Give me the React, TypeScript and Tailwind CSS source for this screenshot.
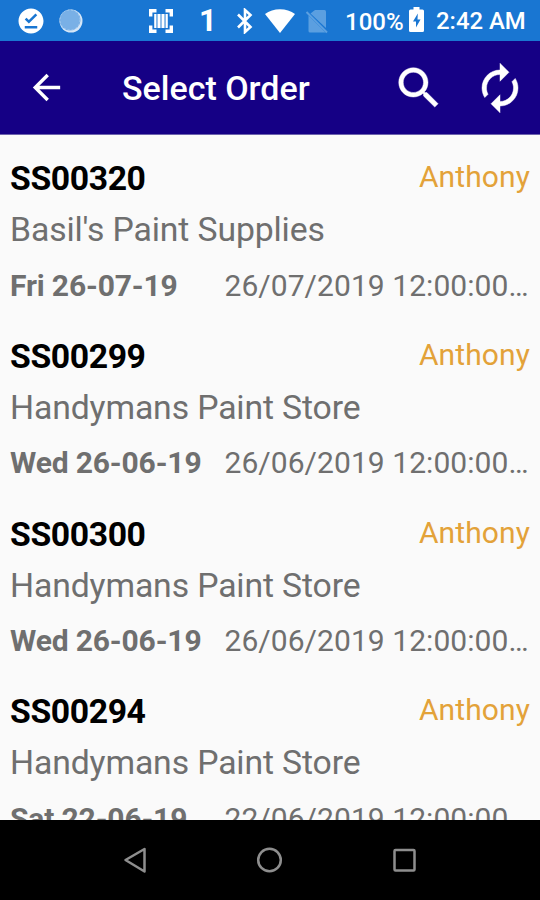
import { MdArrowBack, MdOfflinePin } from "react-icons/md";

type Order = {
  id: string;
  customer: string;
  rep: string;
  day: string;
  timestamp: string;
};

const ORDERS: Order[] = [
  { id: "SS00320", customer: "Basil's Paint Supplies", rep: "Anthony", day: "Fri 26-07-19", timestamp: "26/07/2019 12:00:00…" },
  { id: "SS00299", customer: "Handymans Paint Store", rep: "Anthony", day: "Wed 26-06-19", timestamp: "26/06/2019 12:00:00…" },
  { id: "SS00300", customer: "Handymans Paint Store", rep: "Anthony", day: "Wed 26-06-19", timestamp: "26/06/2019 12:00:00…" },
  { id: "SS00294", customer: "Handymans Paint Store", rep: "Anthony", day: "Sat 22-06-19", timestamp: "22/06/2019 12:00:00…" },
];

function ScanIcon() {
  return (
    <svg viewBox="0 0 26 26" className="w-[26px] h-[26px] ml-[65px]" fill="none" stroke="currentColor">
      <path d="M2.700 8.500V2.700H8.500M17.500 2.700h5.800v5.800M23.300 17.500v5.800h-5.800M8.500 23.300H2.700v-5.800" strokeWidth="3.4" />
      <path d="M7.200 6v14M18.800 6v14" strokeWidth="2" />
      <path d="M11 6v14M15 6v14" strokeWidth="2.6" />
      <path d="M7 6h12v14H7Z" fill="currentColor" fillOpacity="0.35" stroke="none" />
    </svg>
  );
}

function BluetoothIcon() {
  return (
    <svg viewBox="0 0 18 26" className="w-[18px] h-[26px] ml-[21px]" fill="none" stroke="currentColor" strokeWidth="2.6">
      <path d="M2 6.500 14.500 19 9 24V2l5.500 5L2 19.500" />
    </svg>
  );
}

function WifiIcon() {
  return (
    <svg viewBox="0 0 30 24" className="w-[30px] h-6 ml-[11px]" fill="currentColor">
      <path d="M15 24 0 5C8-1.500 22-1.500 30 5Z" />
    </svg>
  );
}

function NoSimIcon() {
  return (
    <svg viewBox="0 0 24 26" className="w-6 h-[26px] ml-[10px] text-[#5b9fe0]" fill="currentColor">
      <path d="M10 2h9.500q1.500 0 1.500 1.500V20L5.500 5.500Z" />
      <path d="M3.500 7.500 20.500 24.500H5q-1.500 0-1.500-1.500Z" />
      <path d="m1.500 4 20.500 20.500" stroke="currentColor" strokeWidth="2" />
    </svg>
  );
}

function BatteryIcon() {
  return (
    <svg viewBox="0 0 15 25" className="w-[15px] h-[25px] ml-[7px] -mt-[2px]">
      <path d="M4.500 0h6v2.500h3q1.500 0 1.500 1.500v19.500q0 1.500-1.500 1.500h-12Q0 25 0 23.500V4q0-1.500 1.500-1.500h3Z" fill="currentColor" />
      <path d="M8.800 6.500 4 14.500h3v6l4.500-8h-3Z" fill="#1976d2" />
    </svg>
  );
}

function SearchIcon() {
  return (
    <svg viewBox="0 0 24 24" className="w-[54px] h-[54px]" fill="currentColor" stroke="currentColor" strokeWidth="0.2">
      <path d="M15.500 14h-.79l-.28-.27C15.410 12.590 16 11.110 16 9.500 16 5.910 13.090 3 9.500 3S3 5.910 3 9.500 5.910 16 9.500 16c1.610 0 3.090-.59 4.230-1.570l.27.28v.79l5 4.990L20.490 19l-4.990-5zm-6 0C7.010 14 5 11.990 5 9.500S7.010 5 9.500 5 14 7.010 14 9.500 11.990 14 9.500 14z" />
    </svg>
  );
}

function SyncIcon() {
  return (
    <svg viewBox="0 0 24 24" className="w-[54px] h-[54px] ml-[27px] mr-[13px]" fill="currentColor" stroke="currentColor" strokeWidth="0.2">
      <path d="M12 6v3l4-4-4-4v3c-4.420 0-8 3.580-8 8 0 1.570.46 3.030 1.240 4.260L6.700 14.800c-.45-.83-.7-1.790-.7-2.800 0-3.310 2.690-6 6-6zm6.760 1.740L17.300 9.200c.44.84.7 1.790.7 2.800 0 3.310-2.690 6-6 6v-3l-4 4 4 4v-3c4.420 0 8-3.580 8-8 0-1.570-.46-3.030-1.240-4.260z" />
    </svg>
  );
}

function StatusBar() {
  return (
    <header className="h-[41px] shrink-0 bg-[#1976d2] flex items-center text-white">
      <MdOfflinePin className="w-[30px] h-[30px] ml-4" />
      <svg viewBox="0 0 24 24" className="w-6 h-6 ml-[13px]">
        <circle cx="12" cy="12" r="11.500" fill="#d5e6f7" />
        <circle cx="11" cy="11" r="10.500" fill="#79b0e6" />
        <circle cx="11" cy="11" r="10" fill="none" stroke="#a3caef" strokeWidth="1" strokeDasharray="2 2" />
      </svg>
      <ScanIcon />
      <span className="ml-[25px] w-[16px] text-[31px] leading-none font-bold">1</span>
      <BluetoothIcon />
      <WifiIcon />
      <NoSimIcon />
      <span className="ml-[16px] w-[57px] text-[24px] leading-none font-medium pt-[2px]">100%</span>
      <BatteryIcon />
      <span className="ml-[12px] whitespace-nowrap text-[23.900px] leading-none font-medium pt-[2px]">2:42 AM</span>
    </header>
  );
}

function AppBar() {
  return (
    <div className="h-[94px] shrink-0 bg-[#150085] border-b border-[#6d63ad] flex items-center text-white">
      <MdArrowBack className="w-[41px] h-[41px] ml-[26px]" />
      <h1 className="ml-[55px] flex-1 text-[34px] font-medium leading-10">Select Order</h1>
      <SearchIcon />
      <SyncIcon />
    </div>
  );
}

function OrderRow({ order }: { order: Order }) {
  return (
    <li className="h-[177.65px] pt-[24.25px] px-[10px] text-[#6f6f6f]">
      <div className="flex justify-between leading-10">
        <span className="text-[33.750px] font-bold tracking-[-0.4px] text-black">{order.id}</span>
        <span className="text-[30px] tracking-[0.1px] text-[#e3a239] -mt-[2px]">{order.rep}</span>
      </div>
      <p className="mt-[11px] text-[33.750px] leading-10 tracking-[-0.13px]">{order.customer}</p>
      <div className="mt-[15.5px] flex text-[30px] leading-10 whitespace-nowrap">
        <span className="w-[214.5px] shrink-0 font-bold tracking-[-0.15px]">{order.day}</span>
        <span className="tracking-[0.06px]">{order.timestamp}</span>
      </div>
    </li>
  );
}

function NavBar() {
  return (
    <nav className="h-20 shrink-0 bg-black flex items-center justify-between px-[120px] text-[#8e8e8e]">
      <svg viewBox="0 0 30 30" className="w-[30px] h-[30px]" fill="none" stroke="currentColor" strokeWidth="2.5" strokeLinejoin="round">
        <path d="M24.500 4v22.500L5.500 15Z" />
      </svg>
      <svg viewBox="0 0 30 30" className="w-[30px] h-[30px]" fill="none" stroke="currentColor" strokeWidth="2.500">
        <circle cx="14.500" cy="15" r="11.300" />
      </svg>
      <svg viewBox="0 0 30 30" className="w-[30px] h-[30px]" fill="none" stroke="currentColor" strokeWidth="2.500">
        <rect x="4.500" y="5" width="20" height="20.500" rx="1" />
      </svg>
    </nav>
  );
}

export default function App() {
  return (
    <div className="w-[540px] h-[900px] flex flex-col overflow-hidden bg-[#fafafa] font-['Roboto',sans-serif]">
      <StatusBar />
      <AppBar />
      {/* last row runs under the nav bar */}
      <ul className="flex-1 min-h-0 overflow-hidden">
        {ORDERS.map((order) => (
          <OrderRow key={order.id} order={order} />
        ))}
      </ul>
      <NavBar />
    </div>
  );
}
